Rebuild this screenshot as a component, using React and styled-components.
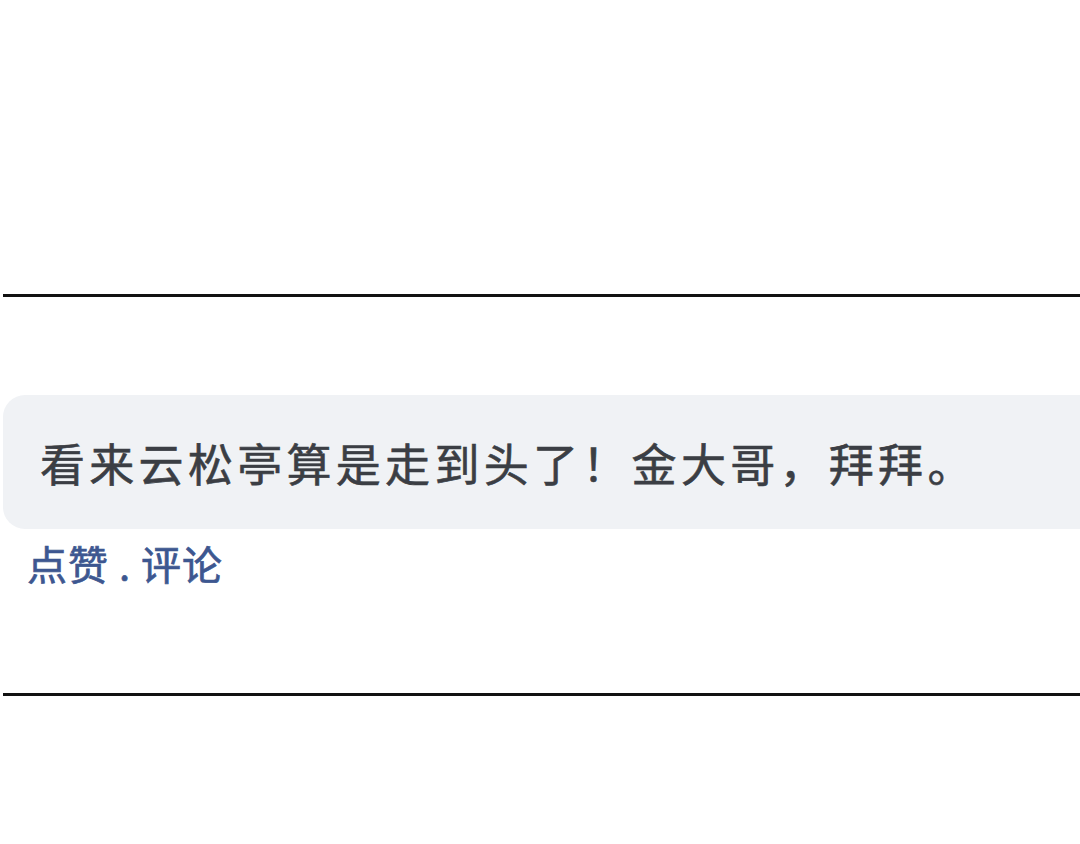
import React from 'react'
import styled, { createGlobalStyle } from 'styled-components'

const GlobalStyle = createGlobalStyle`
  html, body {
    margin: 0;
    padding: 0;
    background: #ffffff;
  }
  body {
    font-family: 'Noto Sans CJK SC', 'Noto Sans', sans-serif;
  }
`

const Page = styled.div`
  width: 1080px;
  height: 844px;
  overflow: hidden;
  display: flex;
  flex-direction: column;
  padding-top: 294px;
  box-sizing: border-box;
`

const Rule = styled.div`
  height: 3px;
  margin-left: 3px;
  background: #111111;
`

const Comment = styled.div`
  display: flex;
  flex-direction: column;
  padding: ${props => props.$top}px 0 0 3px;
  height: 396px;
  box-sizing: border-box;
`

const Bubble = styled.div`
  display: flex;
  align-items: center;
  height: 134px;
  padding-left: 37px;
  background: #f0f2f5;
  border-radius: 22px 0 0 22px;
  box-sizing: border-box;
`

const Body = styled.p`
  margin: 0;
  font-size: 45px;
  letter-spacing: 4.3px;
  color: #3b3e44;
  -webkit-text-stroke: 0.6px #3b3e44;
  line-height: 1;
`

const Actions = styled.div`
  margin-top: 12px;
  padding-left: 24px;
  font-size: 40px;
  line-height: 44px;
  color: #3d5790;
  -webkit-text-stroke: 0.7px #3d5790;
  letter-spacing: 1px;
`

const App = () => {
  return (
    <>
      <GlobalStyle />
      <Page>
        <Rule />
        <Comment $top={98}>
          <Bubble>
            <Body>看来云松亭算是走到头了！金大哥，拜拜。</Body>
          </Bubble>
          <Actions>点赞 . 评论</Actions>
        </Comment>
        <Rule />
      </Page>
    </>
  )
}

export default App
